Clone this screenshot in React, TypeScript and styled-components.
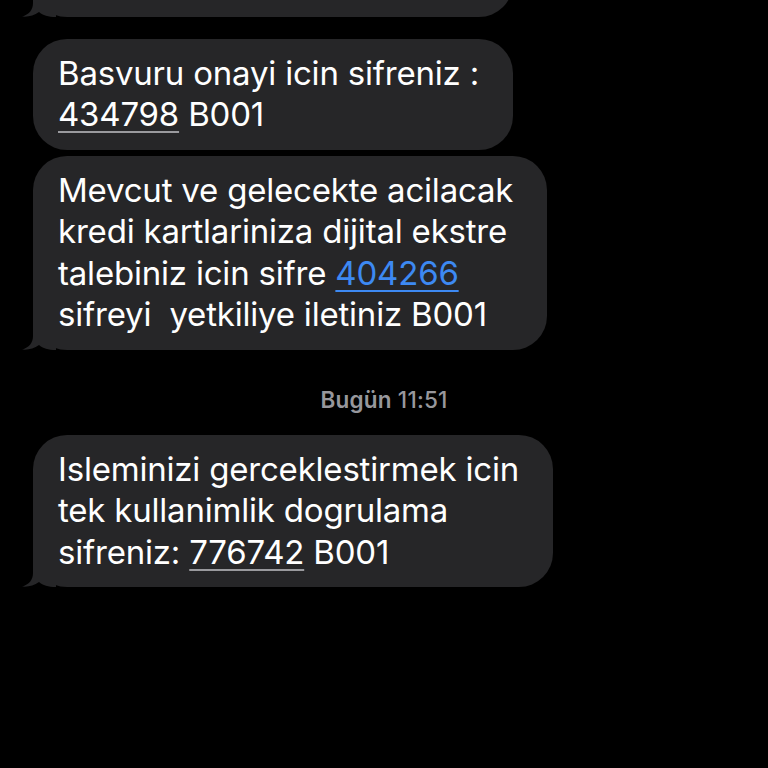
import React from "react";
import styled, { createGlobalStyle } from "styled-components";

const GlobalStyle = createGlobalStyle`
  html, body {
    margin: 0;
    padding: 0;
    background: #000;
  }
  body {
    font-family: Inter, "Noto Sans", "Liberation Sans", sans-serif;
    -webkit-font-smoothing: antialiased;
  }
`;

const Screen = styled.div`
  width: 768px;
  height: 768px;
  overflow: hidden;
  background: #000;
  display: flex;
  flex-direction: column;
  justify-content: flex-end;
  padding: 0 0 181px 33px;
  box-sizing: border-box;
`;

const Group = styled.div<{ $gapBefore: number }>`
  display: flex;
  flex-direction: column;
  align-items: flex-start;
  gap: 6px;
  margin-top: ${(p) => p.$gapBefore}px;
`;

const Bubble = styled.div`
  position: relative;
  background: #262628;
  color: #fff;
  border-radius: 34px;
  padding: 14px 34px 14px 25px;
  font-size: 33px;
  line-height: 41.5px;
  letter-spacing: -0.2px;
  white-space: nowrap;
`;

const Tail = styled.svg`
  position: absolute;
  left: -11px;
  bottom: 0;
  width: 34px;
  height: 36px;
  fill: #262628;
`;

const Code = styled.span<{ $link?: boolean }>`
  color: ${(p) => (p.$link ? "#3d89f2" : "#fff")};
  text-decoration: underline;
  text-decoration-color: ${(p) => (p.$link ? "#3d89f2" : "#9a9a9e")};
  text-decoration-thickness: 2px;
  text-underline-offset: 5px;
`;

const Stamp = styled.div`
  align-self: center;
  margin: 37px 0 22px -33px;
  color: #97979c;
  font-size: 22.5px;
  line-height: 26px;
  font-weight: 500;
  letter-spacing: 0.2px;
`;

const StampDay = styled.span`
  font-weight: 600;
`;

const BubbleTail = () => (
  <Tail viewBox="0 0 34 36" aria-hidden="true">
    <path d="M11,0 L11,22 C11,29 7,33.5 0,35.5 C6,36.2 12,34.6 17,31 C21,34.5 26,36 34,36 L34,0 Z" />
  </Tail>
);

export default function App() {
  return (
    <>
      <GlobalStyle />
      <Screen>
        <Group $gapBefore={0}>
          <Bubble>
            Basvuru onayi icin sifreniz :
            <br />
            <Code>512087</Code> B001
            <BubbleTail />
          </Bubble>
        </Group>
        <Group $gapBefore={22}>
          <Bubble>
            Basvuru onayi icin sifreniz :
            <br />
            <Code>434798</Code> B001
          </Bubble>
          <Bubble>
            Mevcut ve gelecekte acilacak
            <br />
            kredi kartlariniza dijital ekstre
            <br />
            talebiniz icin sifre <Code $link>404266</Code>
            <br />
            sifreyi&nbsp; yetkiliye iletiniz B001
            <BubbleTail />
          </Bubble>
        </Group>
        <Stamp>
          <StampDay>Bugün</StampDay> 11:51
        </Stamp>
        <Group $gapBefore={0}>
          <Bubble>
            Isleminizi gerceklestirmek icin
            <br />
            tek kullanimlik dogrulama
            <br />
            sifreniz: <Code>776742</Code> B001
            <BubbleTail />
          </Bubble>
        </Group>
      </Screen>
    </>
  );
}
